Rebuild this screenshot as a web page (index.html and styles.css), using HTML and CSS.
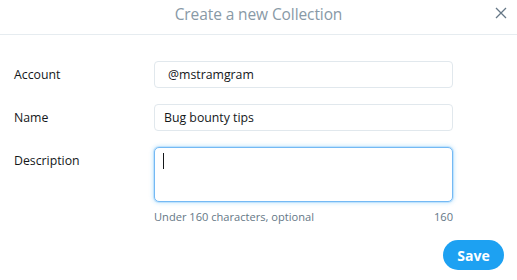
FILE: index.html
```html
<!DOCTYPE html>
<html>
<head>
<meta charset="utf-8">
<link rel="stylesheet" href="styles.css">
</head>
<body>
<div class="modal">
  <header class="header">
    <h1 class="title">Create a new Collection</h1>
    <button class="close" aria-label="Close">
      <svg width="12" height="12" viewBox="0 0 12 12"><path d="M1 1L11 11M11 1L1 11" stroke="#657786" stroke-width="1.3" fill="none"/></svg>
    </button>
  </header>
  <form class="form">
    <div class="row">
      <label class="label">Account</label>
      <div class="field input account">@mstramgram</div>
    </div>
    <div class="row">
      <label class="label">Name</label>
      <div class="field input">Bug bounty tips</div>
    </div>
    <div class="row">
      <label class="label desc-label">Description</label>
      <div class="desc">
        <div class="field textarea"><span class="caret"></span></div>
        <div class="hint"><span>Under 160 characters, optional</span><span>160</span></div>
      </div>
    </div>
    <div class="actions">
      <button type="button" class="save">Save</button>
    </div>
  </form>
</div>
</body>
</html>
```
FILE: styles.css
```css
html, body {
  margin: 0;
  padding: 0;
  background: #fff;
}
body {
  font-family: "Open Sans", "Noto Sans", sans-serif;
  color: #14171a;
  width: 517px;
  height: 280px;
  overflow: hidden;
}
.header {
  position: relative;
  height: 34px;
  border-bottom: 1px solid #e6ecf0;
  display: flex;
  justify-content: center;
}
.title {
  margin: 3px 0 0 0;
  font-size: 15.5px;
  line-height: 22px;
  font-weight: 400;
  color: #8899a6;
  letter-spacing: -0.1px;
}
.close {
  position: absolute;
  right: 10px;
  top: 7px;
  width: 12px;
  height: 12px;
  padding: 0;
  border: 0;
  background: none;
  display: flex;
}
.form {
  padding: 26px 14px 0 14px;
  display: flex;
  flex-direction: column;
  gap: 16px;
}
.row {
  display: flex;
  align-items: center;
}
.row:nth-child(3) {
  align-items: flex-start;
}
.label {
  width: 140px;
  font-size: 12.3px;
  color: #14171a;
}
.desc-label {
  padding-top: 5px;
}
.field {
  box-sizing: border-box;
  width: 299px;
  border: 1px solid #e1e8ed;
  border-radius: 4px;
  font-size: 12.3px;
  color: #14171a;
  background: #fff;
}
.input {
  height: 27px;
  line-height: 25px;
  padding-left: 9px;
}
.account {
  padding-left: 13px;
}
.textarea {
  height: 55px;
  border-color: #74b9f4;
  box-shadow: 0 0 0 1px rgba(140, 200, 250, 0.35), 0 0 4px 1px rgba(29, 161, 242, 0.25);
  padding: 5px 8px;
  border-radius: 5px;
}
.caret {
  display: block;
  width: 1px;
  height: 16px;
  background: #14171a;
}
.hint {
  margin-top: 7px;
  display: flex;
  justify-content: space-between;
  font-size: 11.1px;
  color: #657786;
}
.actions {
  display: flex;
  justify-content: flex-end;
  margin-top: 0;
}
.save {
  margin-right: -1px;
  width: 61px;
  height: 30px;
  border: 0;
  border-radius: 15px;
  background: #1da1f2;
  color: #fff;
  font-family: "Open Sans", sans-serif;
  font-weight: 700;
  font-size: 14px;
  padding: 0;
}
```
